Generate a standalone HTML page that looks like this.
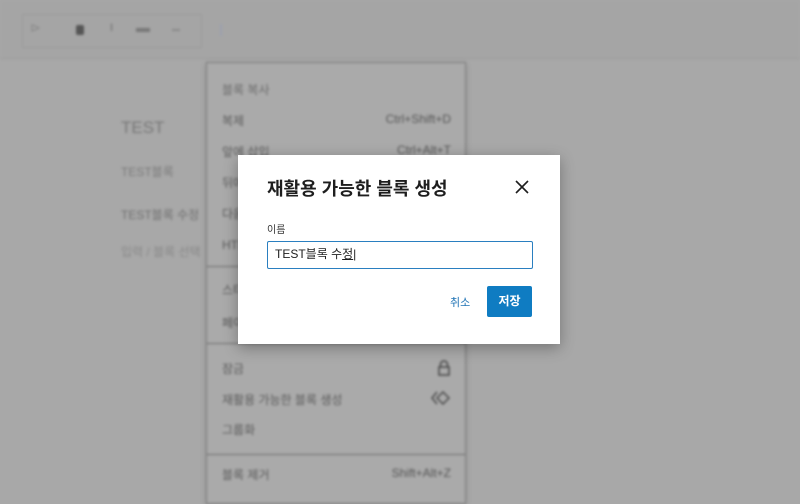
<!DOCTYPE html>
<html><head><meta charset="utf-8"><style>
body{margin:0;width:800px;height:500px;overflow:hidden;background:#a8a8a8;font-family:"Liberation Sans","Noto Sans CJK KR",sans-serif;position:relative}
.bg{position:absolute;inset:0;filter:blur(1.2px)}
.tb{position:absolute;left:0;top:0;width:800px;height:58px;background:#a5a5a5;border-bottom:1px solid #9c9c9c}
.t{position:absolute;color:#6a6a6a;font-size:13px}
.menu{position:absolute;left:206px;top:62px;width:258px;height:440px;background:#aaaaaa;border:1px solid #7a7a7a;box-shadow:0 2px 6px rgba(0,0,0,.15)}
.mi{position:absolute;left:15px;right:14px;font-size:12px;color:#5a5a5a}
.mi span{float:right;color:#555}
.sep{position:absolute;left:0;right:0;height:1px;background:#6a6a6a}
.modal{position:absolute;left:238px;top:155px;width:322px;height:189px;background:#fff;box-shadow:0 4px 14px rgba(0,0,0,.3)}
</style></head><body>
<div class="bg">
<div class="tb">
<div style="position:absolute;left:22px;top:14px;width:178px;height:32px;border:1px solid #9a9a9a"></div>
<div class="t" style="left:30px;top:20px;color:#888">⊳</div>
<div style="position:absolute;left:76px;top:25px;width:8px;height:10px;background:#555;border-radius:2px"></div>
<div class="t" style="left:110px;top:22px;font-size:11px">I</div>
<div style="position:absolute;left:136px;top:28px;width:14px;height:4px;background:#777"></div>
<div style="position:absolute;left:172px;top:29px;width:8px;height:2px;background:#888"></div>
<div style="position:absolute;left:220px;top:24px;width:2px;height:12px;background:#9aa0b0"></div>
</div>
<div class="t" style="left:121px;top:118px;font-size:17px;color:#777">TEST</div>
<div class="t" style="left:121px;top:163px;font-size:12px;color:#7a7a7a">TEST블록</div>
<div class="t" style="left:121px;top:206px;font-size:12px;color:#6f6f6f">TEST블록 수정</div>
<div class="t" style="left:121px;top:243px;font-size:12px;color:#888">입력 / 블록 선택</div>
<div class="menu">
<div class="mi" style="top:18px;color:#6a6a6a">블록 복사</div>
<div class="mi" style="top:49px">복제<span>Ctrl+Shift+D</span></div>
<div class="mi" style="top:80px">앞에 삽입<span>Ctrl+Alt+T</span></div>
<div class="mi" style="top:111px">뒤에 삽입</div>
<div class="mi" style="top:142px">다음으로 이동</div>
<div class="mi" style="top:173px">HTML로 편집</div>
<div class="sep" style="top:203px"></div>
<div class="mi" style="top:218px">스타일 복사</div>
<div class="mi" style="top:251px">페이지 붙여넣기</div>
<div class="sep" style="top:280px"></div>
<div class="mi" style="top:297px">잠금<svg style="float:right" width="14" height="16" viewBox="0 0 14 16"><path d="M3.5 7V4.5a3.5 3.5 0 0 1 7 0V7M2 7h10v8H2z" fill="none" stroke="#444" stroke-width="1.5"/></svg></div>
<div class="mi" style="top:328px">재활용 가능한 블록 생성<svg style="float:right" width="20" height="14" viewBox="0 0 20 14"><path d="M6 1L1 7l5 6M12 1l-6 6 6 6 6-6z" fill="none" stroke="#444" stroke-width="1.4"/></svg></div>
<div class="mi" style="top:358px">그룹화</div>
<div class="sep" style="top:391px"></div>
<div class="mi" style="top:403px">블록 제거<span>Shift+Alt+Z</span></div>
</div>
</div>
<div class="modal">
<div style="position:absolute;left:29px;top:20px;font-size:18px;font-weight:bold;color:#1e1e1e">재활용 가능한 블록 생성</div>
<svg style="position:absolute;left:277px;top:25px" width="14" height="14" viewBox="0 0 14 14"><path d="M1 1L13 13M13 1L1 13" stroke="#1e1e1e" stroke-width="1.6"/></svg>
<div style="position:absolute;left:29px;top:66px;font-size:10px;color:#333">이름</div>
<div style="position:absolute;left:29px;top:86px;border:1.5px solid #2a7fc0;border-radius:2px;font-size:12px;line-height:25px;padding-left:7px;color:#1e1e1e;box-sizing:border-box;width:266px;height:28px">TEST블록 수<u>정</u>|</div>
<div style="position:absolute;left:212px;top:139px;font-size:11px;color:#1f73b5">취소</div>
<div style="position:absolute;left:249px;top:131px;width:45px;height:31px;background:#0f7cc2;border-radius:2px;color:#fff;font-size:12px;font-weight:bold;text-align:center;line-height:31px">저장</div>
</div>
</body></html>
